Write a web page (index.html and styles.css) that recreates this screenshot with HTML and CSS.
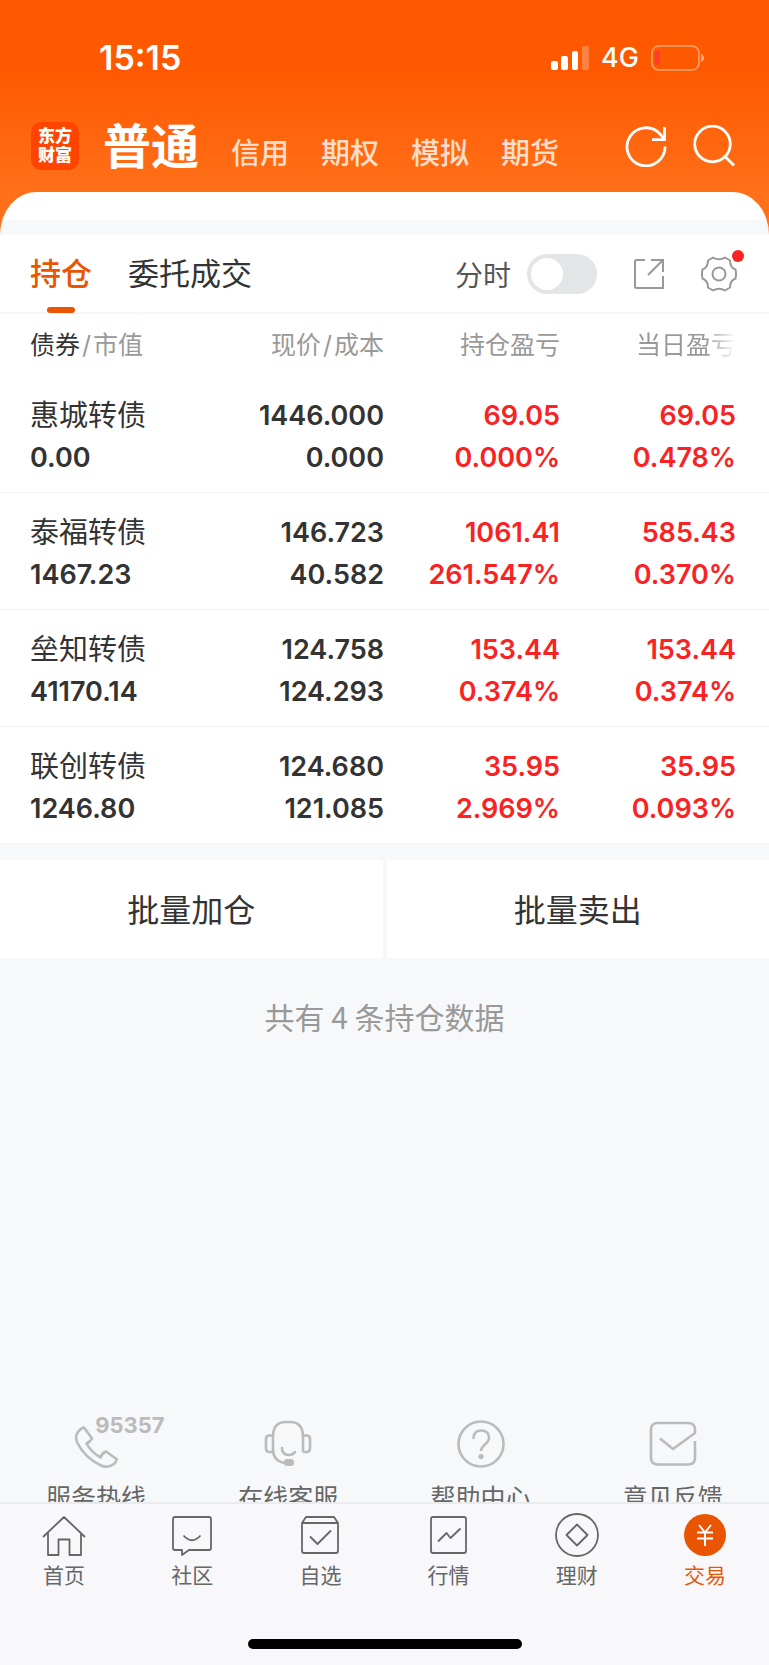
FILE: index.html
```
<!DOCTYPE html>
<html lang="zh-CN">

<head>
    <meta charset="UTF-8">
    <meta name="viewport" content="width=device-width, initial-scale=1">
    <title>持仓</title>
    <link rel="stylesheet" href="styles.css">
</head>

<body>
    <div class="app">
        <header class="header">
            <div class="status">
                <span class="time">15:15</span>
                <div class="status_right">
                    <svg class="signal" width="38" height="24" viewBox="0 0 38 24" fill="#fff">
                        <rect x="0" y="15" width="7" height="9" rx="2" />
                        <rect x="10" y="10" width="7" height="14" rx="2" />
                        <rect x="21" y="5" width="6" height="19" rx="2" />
                        <rect x="31" y="0" width="7" height="24" rx="2" opacity=".25" />
                    </svg>
                    <span class="net">4G</span>
                    <svg class="battery" width="54" height="26" viewBox="0 0 54 26">
                        <rect x="1" y="1" width="47" height="24" rx="7" fill="none" stroke="#fff" stroke-opacity=".45" stroke-width="1.6" />
                        <path d="M4 8q0-3 5-3v15q-5 0-5-3z" fill="#ff3b30" />
                        <path d="M50 9q3 1 3 4t-3 4z" fill="#fff" opacity=".5" />
                    </svg>
                </div>
            </div>
            <div class="titlebar">
                <div class="logo"><span>东方</span><span>财富</span></div>
                <nav class="accounts">
                    <a class="active" href="#">普通</a>
                    <a href="#">信用</a>
                    <a href="#">期权</a>
                    <a href="#">模拟</a>
                    <a href="#">期货</a>
                </nav>
                <div class="actions">
                    <button type="button" aria-label="刷新">
                        <svg width="42" height="42" viewBox="0 0 42 42" fill="none" stroke="#fff" stroke-width="2.8">
                            <path d="M40 21.500A19 19 0 1 1 35.500 9.500L39 14" />
                            <path d="M39.500 2v12.600H27" />
                        </svg>
                    </button>
                    <button type="button" aria-label="搜索">
                        <svg width="42" height="42" viewBox="0 0 42 42" fill="none" stroke="#fff" stroke-width="2.800">
                            <circle cx="19.500" cy="19" r="17.800" />
                            <path d="M32 31.500L41 40.500" />
                        </svg>
                    </button>
                </div>
            </div>
        </header>

        <main class="content">
            <div class="sheet_top"></div>

            <section class="panel">
                <div class="tabs">
                    <a class="tab active" href="#">持仓</a>
                    <a class="tab" href="#">委托成交</a>
                    <div class="tools">
                        <label class="switch">
                            <span>分时</span>
                            <input type="checkbox">
                        </label>
                        <button type="button" aria-label="分享">
                            <svg width="32" height="32" viewBox="0 0 32 32" fill="none" stroke="#999" stroke-width="2">
                                <path d="M12 2H3.500Q2 2 2 3.500V28.500Q2 30 3.500 30H30V18" />
                                <path d="M18 2H30V14M30 2L15 17" />
                            </svg>
                        </button>
                        <button class="setting" type="button" aria-label="设置">
                            <svg width="36" height="36" viewBox="0 0 36 36" fill="none" stroke="#999" stroke-width="2" stroke-linejoin="round">
                                <path d="M12 1.500Q18 5 24 1.500L29 4.500Q29 11.500 34.500 13.500Q35.500 18 34.500 22.500Q29 24.500 29 31.500L24 34.500Q18 31 12 34.500L7 31.500Q7 24.500 1.500 22.500Q.5 18 1.500 13.500Q7 11.500 7 4.500Z" />
                                <circle cx="18" cy="18" r="6.500" />
                            </svg>
                            <i class="dot"></i>
                        </button>
                    </div>
                </div>

                <table class="holdings">
                    <thead>
                        <tr>
                            <th><b>债券</b><i>/</i>市值</th>
                            <th>现价<i>/</i>成本</th>
                            <th>持仓盈亏</th>
                            <th><span class="fade">当日盈亏</span></th>
                        </tr>
                    </thead>
                    <tbody>
                        <tr>
                            <td><div class="name">惠城转债</div><div>0.00</div></td>
                            <td><div>1446.000</div><div>0.000</div></td>
                            <td class="up"><div>69.05</div><div>0.000%</div></td>
                            <td class="up"><div>69.05</div><div>0.478%</div></td>
                        </tr>
                        <tr>
                            <td><div class="name">泰福转债</div><div>1467.23</div></td>
                            <td><div>146.723</div><div>40.582</div></td>
                            <td class="up"><div>1061.41</div><div>261.547%</div></td>
                            <td class="up"><div>585.43</div><div>0.370%</div></td>
                        </tr>
                        <tr>
                            <td><div class="name">垒知转债</div><div>41170.14</div></td>
                            <td><div>124.758</div><div>124.293</div></td>
                            <td class="up"><div>153.44</div><div>0.374%</div></td>
                            <td class="up"><div>153.44</div><div>0.374%</div></td>
                        </tr>
                        <tr>
                            <td><div class="name">联创转债</div><div>1246.80</div></td>
                            <td><div>124.680</div><div>121.085</div></td>
                            <td class="up"><div>35.95</div><div>2.969%</div></td>
                            <td class="up"><div>35.95</div><div>0.093%</div></td>
                        </tr>
                    </tbody>
                </table>
            </section>

            <div class="batch">
                <button type="button">批量加仓</button>
                <button type="button">批量卖出</button>
            </div>

            <p class="total">共有 4 条持仓数据</p>

            <div class="services">
                <a href="#">
                    <span class="phone">
                        <svg width="48" height="48" viewBox="0 0 48 48" fill="none" stroke="#bbb" stroke-width="2.600" stroke-linejoin="round">
                            <path d="M12 7.500L20 18.500Q18 22 14.500 23.500Q19 32 28.500 37.500Q30 33 34 31.500L44.500 39Q45 41 42 44Q36 48.500 29 45.500Q13 38 5.500 23Q2.500 16.500 6 12Q9 8 12 7.500Z" />
                        </svg>
                        <em>95357</em>
                    </span>
                    <span>服务热线</span>
                </a>
                <a href="#">
                    <svg width="48" height="48" viewBox="0 0 48 48" fill="none" stroke="#bbb" stroke-width="2.600">
                        <path d="M9 32V17Q9 2 22 2H26Q39 2 39 17V32" />
                        <path d="M9 15.500H5.500Q2 15.500 2 19V28.500Q2 32 5.500 32H9M39 15.500H42.500Q46 15.500 46 19V28.500Q46 32 42.500 32H39" />
                        <path d="M9 31Q10 42 22 43M18 28Q18 35 25 35Q29 35 31 32" stroke-linecap="round" />
                        <rect x="20" y="39" width="10" height="7" rx="3" fill="#bbb" stroke="none" />
                    </svg>
                    <span>在线客服</span>
                </a>
                <a href="#">
                    <svg width="48" height="48" viewBox="0 0 48 48" fill="none" stroke="#bbb" stroke-width="2.600">
                        <circle cx="24" cy="24" r="22.500" />
                        <path d="M16.500 19Q16.500 10.500 24 10.500Q32 10.500 32 18Q32 21 28 24.500Q24 28 24 31" />
                        <circle cx="24" cy="36.500" r="2.600" fill="#bbb" stroke="none" />
                    </svg>
                    <span>帮助中心</span>
                </a>
                <a href="#">
                    <svg width="48" height="48" viewBox="0 0 48 48" fill="none" stroke="#bbb" stroke-width="2.600" stroke-linejoin="round">
                        <path d="M46 21V38Q46 44.500 39 44.500H9Q2 44.500 2 38V9.500Q2 3 9 3H39Q46 3 46 9.500V13L24 29L11 18.500" />
                    </svg>
                    <span>意见反馈</span>
                </a>
            </div>
        </main>

        <footer class="footer">
            <nav class="tabbar">
                <a href="#">
                    <svg width="44" height="44" viewBox="0 0 44 44">
                        <path d="M1 24L22 4L43 24M6 20V42H16.500V26.500H27.500V42H39V20" />
                    </svg>
                    <span>首页</span>
                </a>
                <a href="#">
                    <svg width="44" height="44" viewBox="0 0 44 44">
                        <path d="M5 4H39Q41 4 41 6V35Q41 37 39 37H19L12 42V37H5Q3 37 3 35V6Q3 4 5 4ZM13.500 22.500Q22 32 30.500 22.500" />
                    </svg>
                    <span>社区</span>
                </a>
                <a href="#">
                    <svg width="44" height="44" viewBox="0 0 44 44">
                        <path d="M4 10L8 4H36L40 10V38Q40 40 38 40H6Q4 40 4 38V10H40M12 23.500L19.500 31L33 17.500" />
                    </svg>
                    <span>自选</span>
                </a>
                <a href="#">
                    <svg width="44" height="44" viewBox="0 0 44 44">
                        <path d="M6 4H37Q39 4 39 6V38Q39 40 37 40H6Q4 40 4 38V6Q4 4 6 4ZM11 28.500L19.500 20L23.500 25L33.500 15.500" />
                    </svg>
                    <span>行情</span>
                </a>
                <a href="#">
                    <svg width="44" height="44" viewBox="0 0 44 44">
                        <circle cx="22" cy="22" r="21" />
                        <path d="M22 11.500L32.500 22L22 32.500L11.500 22Z" />
                    </svg>
                    <span>理财</span>
                </a>
                <a class="active" href="#">
                    <svg width="44" height="44" viewBox="0 0 44 44">
                        <circle class="coin" cx="22" cy="22" r="21" />
                        <path class="yen" d="M16 12L22 19.500L28 12M22 19.500V33M14 19.500H30M14 25.500H30" />
                    </svg>
                    <span>交易</span>
                </a>
            </nav>
            <div class="home_bar"></div>
        </footer>
    </div>
</body>

</html>
```
FILE: styles.css
```
* {
    box-sizing: border-box;
}

body {
    margin: 0;
    font-family: Inter, "Noto Sans CJK SC", sans-serif;
    color: #333;
    background: #f7f8fa;
}

a {
    color: inherit;
    text-decoration: none;
}

button {
    padding: 0;
    border: 0;
    background: none;
    color: inherit;
    font: inherit;
}

svg {
    display: block;
    flex: none;
}

i,
em {
    font-style: normal;
}

.app {
    display: flex;
    flex-direction: column;
    height: 100vh;
}

/* 顶部 */
.header {
    flex: none;
    padding-bottom: 60px;
    color: #fff;
    background: linear-gradient(#ff5900 70px, #ff7019 192px);
}

.status {
    display: flex;
    justify-content: space-between;
    align-items: center;
    padding: 36px 64px 0 99px;
    line-height: 44px;
}

.time {
    font-size: 34px;
    font-weight: 600;
}

.status_right {
    display: flex;
    align-items: center;
    gap: 12px;
}

.net {
    font-size: 27px;
    font-weight: 500;
}

.titlebar {
    display: flex;
    align-items: center;
    margin-top: 36px;
    padding: 0 34px 0 31px;
    height: 60px;
}

.logo {
    display: flex;
    flex-direction: column;
    justify-content: center;
    width: 48px;
    height: 48px;
    border-radius: 10px;
    background: #ff4400;
    font-size: 17px;
    font-weight: 900;
    line-height: 19px;
    text-align: center;
}

.accounts {
    display: flex;
    align-items: baseline;
    gap: 32px;
    margin-left: 24px;
    padding-top: 8px;
    font-size: 29px;
    font-weight: 500;
    line-height: 60px;
    color: rgba(255, 255, 255, .8);
}

.accounts .active {
    font-size: 48px;
    font-weight: 700;
    color: #fff;
}

.actions {
    display: flex;
    gap: 26px;
    margin-left: auto;
}

/* 内容区 */
.content {
    flex: 1;
    min-height: 0;
    margin-top: -44px;
    overflow: hidden;
}

.sheet_top {
    height: 43px;
    border-radius: 36px 36px 0 0 / 43px 43px 0 0;
    background: linear-gradient(#fff 28px, #f7f8fa 28px);
}

.panel {
    background: #fff;
}

.tabs {
    display: flex;
    align-items: center;
    gap: 36px;
    height: 79px;
    padding: 0 32px 0 30px;
    border-bottom: 2px solid #f7f7f8;
}

.tab {
    position: relative;
    font-size: 31px;
    line-height: 79px;
}

.tab.active {
    font-weight: 500;
    color: #ea5504;
}

.tab.active::after {
    content: "";
    position: absolute;
    left: 50%;
    bottom: 0;
    width: 28px;
    height: 6px;
    margin-left: -14px;
    border-radius: 3px;
    background: #ea5504;
}

.tools {
    display: flex;
    align-items: center;
    gap: 36px;
    margin-left: auto;
}

.switch {
    display: flex;
    align-items: center;
    gap: 16px;
    font-size: 28px;
    color: #555;
}

.switch input {
    appearance: none;
    width: 70px;
    height: 40px;
    margin: 0;
    padding: 4px;
    border-radius: 20px;
    background: #e4e5e7;
}

.switch input::before {
    content: "";
    display: block;
    width: 32px;
    height: 32px;
    border-radius: 50%;
    background: #fff;
}

.switch input:checked {
    background: #ea5504;
}

.switch input:checked::before {
    margin-left: auto;
}

.setting {
    position: relative;
}

.dot {
    position: absolute;
    top: -6px;
    right: -7px;
    width: 12px;
    height: 12px;
    border-radius: 50%;
    background: #fa2222;
}

/* 持仓列表 */
.holdings {
    width: 100%;
    table-layout: fixed;
    border-collapse: collapse;
    text-align: right;
}

.holdings th {
    height: 62px;
    padding: 0;
    font-size: 25px;
    font-weight: 400;
    line-height: 36px;
    text-align: right;
    color: #999;
}

.holdings th:nth-child(3) {
    width: 176px;
}

.holdings th:nth-child(4) {
    width: 209px;
}

.holdings th:first-child,
.holdings td:first-child {
    padding-left: 30px;
    text-align: left;
}

.holdings th:last-child,
.holdings td:last-child {
    padding-right: 33px;
}

.holdings th b {
    font-weight: 400;
    color: #333;
}

.holdings th i {
    margin: 0 2px;
}

.fade {
    -webkit-mask-image: linear-gradient(to right, #000 70%, transparent);
    mask-image: linear-gradient(to right, #000 70%, transparent);
}

.holdings td {
    padding: 19px 0 13px;
    border-bottom: 1px solid #f2f2f4;
    font-size: 27px;
    font-weight: 600;
    line-height: 42px;
}

.holdings td div {
    height: 42px;
}

.holdings .name {
    font-size: 29px;
    font-weight: 400;
}

.holdings .up {
    color: #fa2222;
}

.batch {
    display: flex;
    gap: 4px;
    margin-top: 16px;
}

.batch button {
    flex: 1;
    height: 98px;
    padding-bottom: 2px;
    background: #fff;
    font-size: 32px;
}

.total {
    margin: 36px 0 0;
    font-family: "Noto Sans CJK SC", sans-serif;
    font-size: 30px;
    line-height: 44px;
    text-align: center;
    color: #999;
}

.services {
    display: flex;
    margin-top: 382px;
}

.services a {
    display: flex;
    flex: 1;
    flex-direction: column;
    align-items: center;
    gap: 12px;
    font-size: 25px;
    line-height: 36px;
    color: #666;
}

.phone {
    position: relative;
}

.phone em {
    position: absolute;
    left: 23px;
    top: -7px;
    font-size: 22px;
    font-weight: 700;
    line-height: 24px;
    color: #bbb;
}

/* 底部导航 */
.footer {
    flex: none;
    border-top: 2px solid #ebebed;
    background: #f8f8fb;
}

.tabbar {
    display: flex;
    padding-top: 9px;
}

.tabbar a {
    display: flex;
    flex: 1;
    flex-direction: column;
    align-items: center;
    gap: 4px;
    font-size: 21px;
    line-height: 30px;
    color: #666;
}

.tabbar svg {
    fill: none;
    stroke: #666;
    stroke-width: 1.8;
    stroke-linejoin: round;
}

.tabbar .active {
    color: #ea5504;
}

.tabbar .coin {
    fill: #ea5504;
    stroke: none;
}

.tabbar .yen {
    stroke: #fff;
    stroke-width: 2;
}

.home_bar {
    width: 274px;
    height: 10px;
    margin: 48px auto 16px;
    border-radius: 5px;
    background: #000;
}
```
